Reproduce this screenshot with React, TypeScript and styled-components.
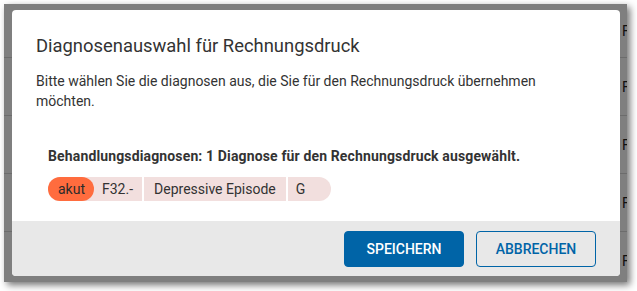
import React from "react";
import styled, { createGlobalStyle } from "styled-components";

const GlobalStyle = createGlobalStyle`
  html, body { margin: 0; padding: 0; background: #ffffff; }
  body { font-family: Roboto, "Liberation Sans", Arial, sans-serif; }
  * { box-sizing: border-box; }
`;

const Page = styled.div`
  width: 637px;
  height: 291px;
  padding: 4px 10px 9px 4px;
  background: #ffffff;
`;

const Frame = styled.div`
  position: relative;
  width: 623px;
  height: 278px;
  overflow: hidden;
  background: #ffffff;
  box-shadow: 3px 3px 7px rgba(0, 0, 0, 0.55);
`;

const BackTable = styled.div`
  display: flex;
  flex-direction: column;
`;

const BackRow = styled.div<{ $h: number }>`
  display: grid;
  grid-template-columns: 618px 1fr;
  align-items: center;
  height: ${(p) => p.$h}px;
  border-bottom: 1px solid #d8d8d8;
  font-size: 14px;
  color: #222;
  white-space: nowrap;
`;

const Overlay = styled.div`
  position: absolute;
  inset: 0;
  background: rgba(0, 0, 0, 0.5);
  padding: 6px 7px 6px 8px;
  display: flex;
`;

const Dialog = styled.div`
  flex: 1;
  display: flex;
  flex-direction: column;
  background: #ffffff;
  border-radius: 4px;
  overflow: hidden;
`;

const Content = styled.div`
  padding: 24px 24px 20px;
  color: #333333;
`;

const Title = styled.h2`
  margin: 0;
  font-size: 18.4px;
  font-weight: 400;
  line-height: 24px;
  color: #333333;
`;

const Description = styled.p`
  margin: 13px 0 0;
  font-size: 14px;
  line-height: 20px;
`;

const Section = styled.div`
  margin-top: 35px;
  padding: 0 12px;
`;

const SectionTitle = styled.div`
  font-size: 14px;
  letter-spacing: 0.14px;
  font-weight: 700;
  line-height: 20px;
  color: #333333;
`;

const ChipGroup = styled.div`
  display: inline-flex;
  gap: 2px;
  margin-top: 11px;
`;

const Segment = styled.div<{ $pos?: "first" | "last" }>`
  display: flex;
  align-items: center;
  height: 24px;
  padding: ${(p) =>
    p.$pos === "first" ? "0 9px 0 0" : p.$pos === "last" ? "0 26px 0 8px" : "0 10px"};
  background: #f2dfde;
  border-radius: ${(p) =>
    p.$pos === "first" ? "12px 0 0 12px" : p.$pos === "last" ? "0 12px 12px 0" : "0"};
  font-size: 14px;
  color: #333333;
  white-space: nowrap;
`;

const Badge = styled.span`
  display: flex;
  align-items: center;
  height: 24px;
  padding: 0 9px 0 10px;
  margin-right: 8px;
  border-radius: 12px;
  background: #ff6c3e;
  color: #2b2b2b;
`;

const Footer = styled.div`
  flex: 1;
  display: flex;
  justify-content: flex-end;
  align-items: flex-start;
  gap: 12px;
  padding: 10px 24px 0;
  background: #e8e8e8;
`;

const Button = styled.button<{ $primary?: boolean }>`
  width: 120px;
  height: 36px;
  border-radius: 4px;
  border: 1px solid #0064a7;
  background: ${(p) => (p.$primary ? "#0064a7" : "transparent")};
  color: ${(p) => (p.$primary ? "#ffffff" : "#0064a7")};
  font-family: Roboto, "Liberation Sans", Arial, sans-serif;
  font-size: 14px;
  font-weight: 500;
  text-transform: uppercase;
  cursor: pointer;
`;

export default function App() {
  const rows = [54, 58, 58, 58, 58];
  return (
    <>
      <GlobalStyle />
      <Page>
        <Frame>
          <BackTable>
            {rows.map((h, i) => (
              <BackRow key={i} $h={h}>
                <span />
                <span>F32.-</span>
              </BackRow>
            ))}
          </BackTable>
          <Overlay>
            <Dialog>
              <Content>
                <Title>Diagnosenauswahl für Rechnungsdruck</Title>
                <Description>
                  Bitte wählen Sie die diagnosen aus, die Sie für den Rechnungsdruck übernehmen
                  möchten.
                </Description>
                <Section>
                  <SectionTitle>
                    Behandlungsdiagnosen: 1 Diagnose für den Rechnungsdruck ausgewählt.
                  </SectionTitle>
                  <ChipGroup>
                    <Segment $pos="first">
                      <Badge>akut</Badge>
                      F32.-
                    </Segment>
                    <Segment>Depressive Episode</Segment>
                    <Segment $pos="last">G</Segment>
                  </ChipGroup>
                </Section>
              </Content>
              <Footer>
                <Button $primary>Speichern</Button>
                <Button>Abbrechen</Button>
              </Footer>
            </Dialog>
          </Overlay>
        </Frame>
      </Page>
    </>
  );
}
